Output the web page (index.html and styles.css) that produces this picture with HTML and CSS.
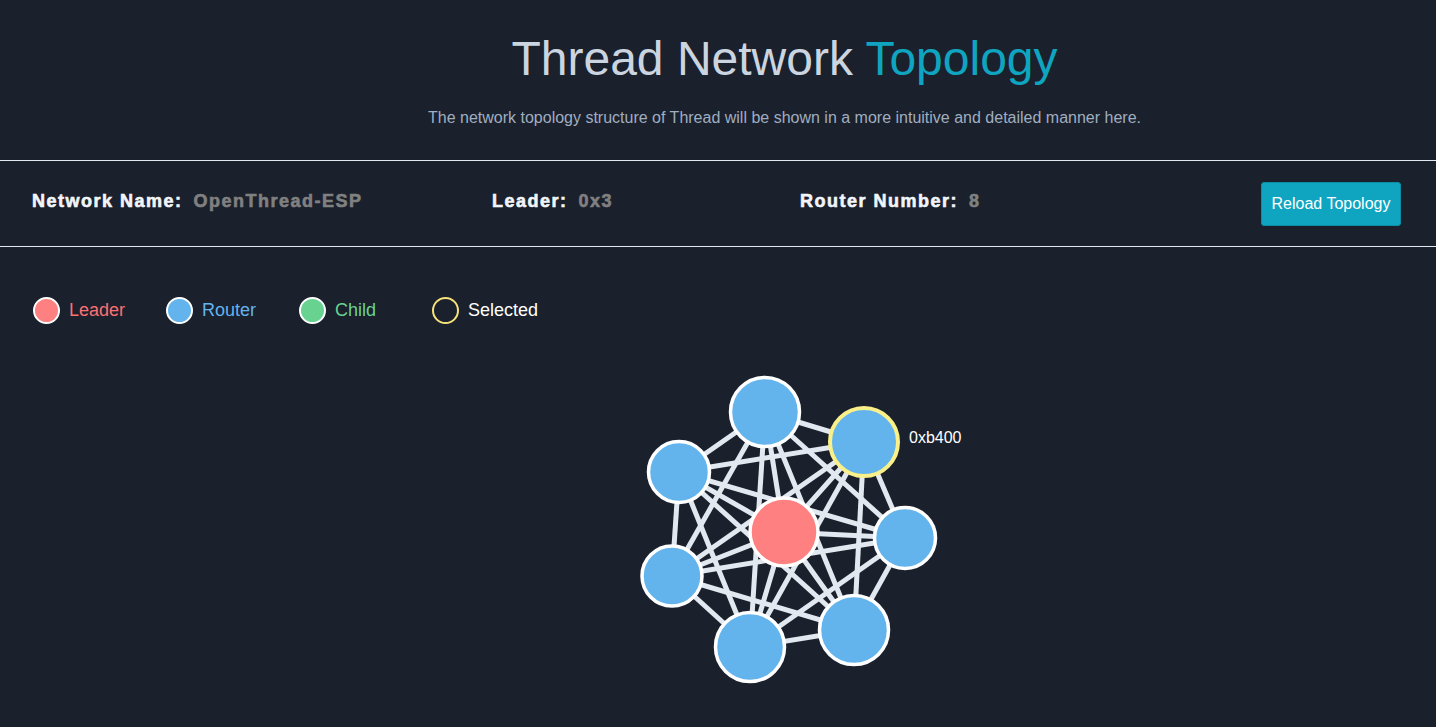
FILE: index.html
```html
<!DOCTYPE html>
<html lang="en">
<head>
<meta charset="utf-8">
<title>Thread Network Topology</title>
<link rel="stylesheet" href="styles.css">
</head>
<body>
<header class="page-header">
  <h1 class="title">Thread Network <span class="accent">Topology</span></h1>
  <p class="subtitle">The network topology structure of Thread will be shown in a more intuitive and detailed manner here.</p>
</header>

<section class="info-bar">
  <div class="info-item item-name"><span class="info-label">Network Name:</span><span class="info-value">OpenThread-ESP</span></div>
  <div class="info-item item-leader"><span class="info-label">Leader:</span><span class="info-value">0x3</span></div>
  <div class="info-item item-routers"><span class="info-label">Router Number:</span><span class="info-value">8</span></div>
  <button class="reload-btn" type="button">Reload Topology</button>
</section>

<section class="legend">
  <div class="legend-item"><span class="dot dot-leader"></span><span class="legend-text text-leader">Leader</span></div>
  <div class="legend-item"><span class="dot dot-router"></span><span class="legend-text text-router">Router</span></div>
  <div class="legend-item"><span class="dot dot-child"></span><span class="legend-text text-child">Child</span></div>
  <div class="legend-item"><span class="dot dot-selected"></span><span class="legend-text text-selected">Selected</span></div>
</section>

<svg class="topology" width="1436" height="397" viewBox="0 330 1436 397" xmlns="http://www.w3.org/2000/svg">
  <g class="links">
    <line x1="765" y1="413" x2="864" y2="443"/>
    <line x1="765" y1="413" x2="679" y2="473"/>
    <line x1="765" y1="413" x2="784" y2="533"/>
    <line x1="765" y1="413" x2="905" y2="539"/>
    <line x1="765" y1="413" x2="672" y2="577"/>
    <line x1="765" y1="413" x2="750" y2="648"/>
    <line x1="765" y1="413" x2="854" y2="631"/>
    <line x1="864" y1="443" x2="679" y2="473"/>
    <line x1="864" y1="443" x2="784" y2="533"/>
    <line x1="864" y1="443" x2="905" y2="539"/>
    <line x1="864" y1="443" x2="672" y2="577"/>
    <line x1="864" y1="443" x2="750" y2="648"/>
    <line x1="864" y1="443" x2="854" y2="631"/>
    <line x1="679" y1="473" x2="784" y2="533"/>
    <line x1="679" y1="473" x2="905" y2="539"/>
    <line x1="679" y1="473" x2="672" y2="577"/>
    <line x1="679" y1="473" x2="750" y2="648"/>
    <line x1="679" y1="473" x2="854" y2="631"/>
    <line x1="784" y1="533" x2="905" y2="539"/>
    <line x1="784" y1="533" x2="672" y2="577"/>
    <line x1="784" y1="533" x2="750" y2="648"/>
    <line x1="784" y1="533" x2="854" y2="631"/>
    <line x1="905" y1="539" x2="672" y2="577"/>
    <line x1="905" y1="539" x2="750" y2="648"/>
    <line x1="905" y1="539" x2="854" y2="631"/>
    <line x1="672" y1="577" x2="750" y2="648"/>
    <line x1="672" y1="577" x2="854" y2="631"/>
    <line x1="750" y1="648" x2="854" y2="631"/>
  </g>
  <g class="nodes">
    <circle class="node router" cx="765" cy="413" r="34.5"/>
    <circle class="node router" cx="679" cy="473" r="30.5"/>
    <circle class="node leader" cx="784" cy="533" r="34"/>
    <circle class="node router" cx="905" cy="539" r="30.5"/>
    <circle class="node router" cx="672" cy="577" r="30"/>
    <circle class="node router" cx="750" cy="648" r="34.5"/>
    <circle class="node router" cx="854" cy="631" r="34.5"/>
    <circle class="node router selected" cx="864" cy="443" r="34"/>
  </g>
  <text class="node-label" x="909" y="444">0xb400</text>
</svg>
</body>
</html>
```

FILE: styles.css
```css
html, body {
  margin: 0;
  padding: 0;
}

body {
  background: #1a202c;
  font-family: "Liberation Sans", Arial, sans-serif;
  color: #e2e8f0;
  width: 1436px;
  height: 727px;
  overflow: hidden;
}

.page-header {
  padding: 31px 0 0 133px;
  text-align: center;
}

.title {
  margin: 0;
  font-size: 48px;
  line-height: 56px;
  font-weight: 400;
  color: #cbd5e0;
}

.accent {
  color: #0fa5c0;
}

.subtitle {
  margin: 22px 0 0;
  font-size: 16px;
  line-height: 18px;
  color: #a0aec0;
  padding-bottom: 33px;
}

.info-bar {
  display: flex;
  align-items: center;
  height: 85px;
  border-top: 1px solid #e2e8f0;
  border-bottom: 1px solid #e2e8f0;
  padding: 0 35px 0 32px;
}

.info-item {
  display: flex;
  align-items: baseline;
  font-size: 18px;
  font-weight: 700;
  letter-spacing: 1.5px;
  margin-top: -5px;
}

.item-name { width: 460px; }
.item-leader { width: 308px; }
.item-routers { flex: 1; }

.info-label {
  color: #f1f5f9;
  -webkit-text-stroke: 0.6px #f1f5f9;
}

.info-value {
  color: #808080;
  margin-left: 11px;
  -webkit-text-stroke: 0.6px #808080;
}

.reload-btn {
  width: 140px;
  height: 44px;
  background: #0fa5c0;
  border: 1px solid #0b8ea6;
  border-radius: 3px;
  color: #ffffff;
  font-family: "Liberation Sans", Arial, sans-serif;
  font-size: 16px;
  padding: 0;
  cursor: pointer;
}

.legend {
  display: flex;
  align-items: center;
  padding: 50px 0 0 33px;
}

.legend-item {
  display: flex;
  align-items: center;
  width: 133px;
}

.dot {
  box-sizing: border-box;
  width: 27px;
  height: 27px;
  border-radius: 50%;
  border: 2px solid #ffffff;
  margin-right: 9px;
}

.dot-leader { background: #ff8080; }
.dot-router { background: #63b3ed; }
.dot-child { background: #68d391; }
.dot-selected { background: transparent; border-color: #f6e27a; }

.legend-text {
  font-size: 18px;
  line-height: 27px;
}

.text-leader { color: #fc7070; }
.text-router { color: #63b3ed; }
.text-child { color: #68d391; }
.text-selected { color: #ffffff; }

.topology {
  display: block;
  margin-top: 5px;
}

.links line {
  stroke: #e2e8f0;
  stroke-width: 5;
}

.node {
  stroke: #ffffff;
  stroke-width: 3.5;
}

.node.router { fill: #63b3ed; }
.node.leader { fill: #ff8080; }
.node.selected { stroke: #faf089; stroke-width: 4; }

.node-label {
  fill: #ffffff;
  font-family: "Liberation Sans", Arial, sans-serif;
  font-size: 16px;
}
```
